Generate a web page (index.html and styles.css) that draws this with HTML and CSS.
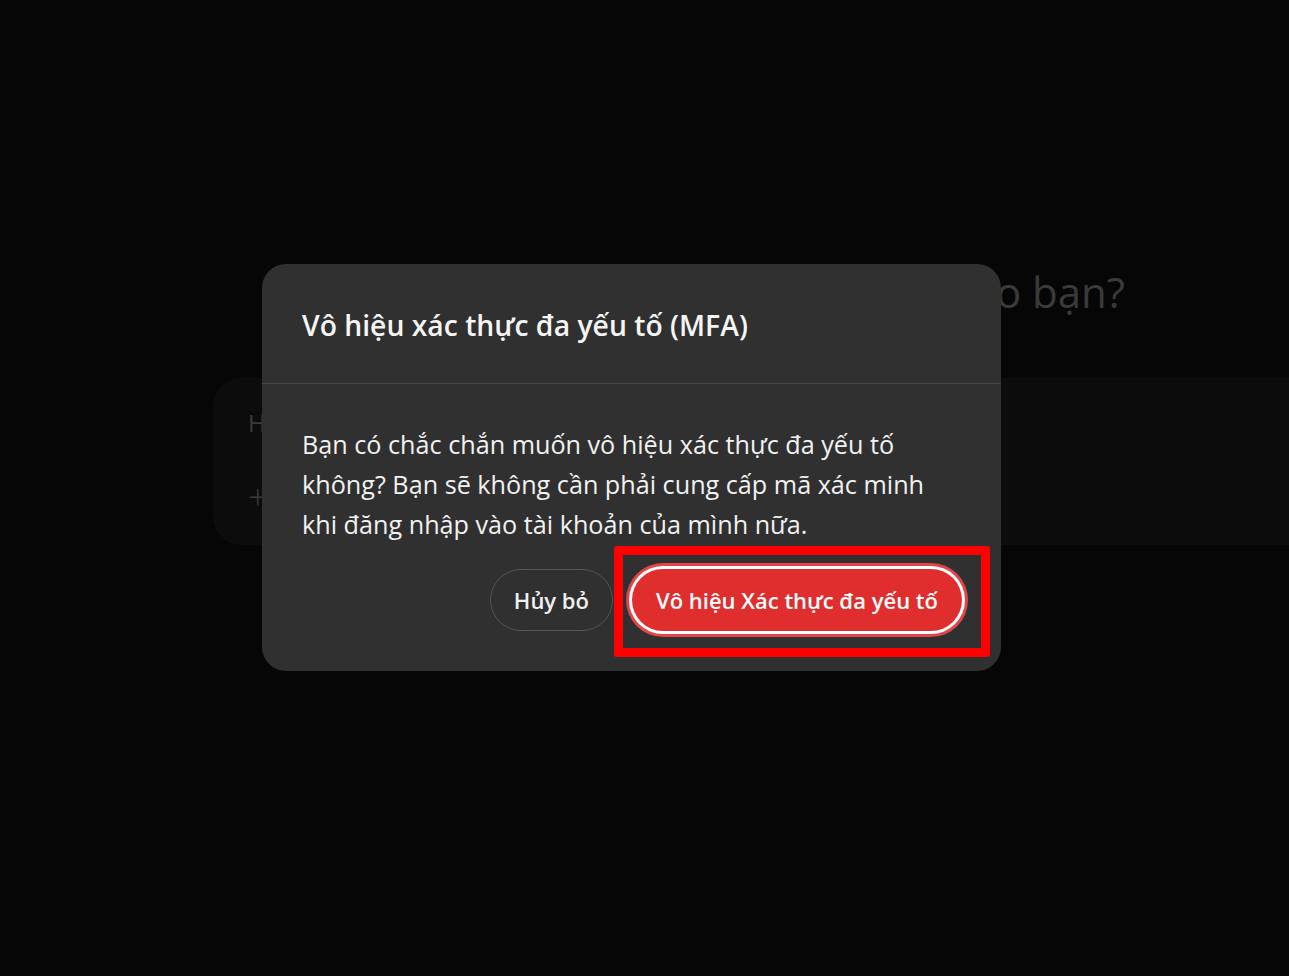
FILE: index.html
```html
<!DOCTYPE html>
<html lang="vi">
<head>
<meta charset="utf-8">
<title>Vô hiệu MFA</title>
<link rel="stylesheet" href="styles.css">
</head>
<body>
<div class="page">
  <div class="main">
    <h1 class="hero">Tôi có thể giúp gì cho bạn?</h1>
    <div class="composer">
      <div class="placeholder">Hỏi bất kỳ điều gì</div>
      <div class="tools"><span class="plus">+</span></div>
    </div>
  </div>
</div>
<div class="overlay">
  <div class="modal" role="dialog">
    <div class="modal-header">
      <h2 class="modal-title">Vô hiệu xác thực đa yếu tố (MFA)</h2>
    </div>
    <div class="modal-body">
      <p class="modal-text">Bạn có chắc chắn muốn vô hiệu xác thực đa yếu tố không? Bạn sẽ không cần phải cung cấp mã xác minh khi đăng nhập vào tài khoản của mình nữa.</p>
      <div class="actions">
        <button class="btn btn-secondary">Hủy bỏ</button>
        <button class="btn btn-danger">Vô hiệu Xác thực đa yếu tố</button>
      </div>
    </div>
  </div>
  <div class="highlight"></div>
</div>
</body>
</html>
```

FILE: styles.css
```css
html, body {
  margin: 0;
  padding: 0;
  height: 100%;
  overflow: hidden;
}
body {
  background: #060606;
  font-family: "Open Sans", "Noto Sans", "Liberation Sans", sans-serif;
  color: #fff;
}
.page {
  width: 1289px;
  height: 976px;
  overflow: hidden;
}
.main {
  padding-top: 262px;
  padding-left: 213px;
}
.hero {
  margin: 0;
  width: 912px;
  text-align: right;
  font-weight: 400;
  font-size: 42px;
  line-height: 60px;
  color: #3a3a3a;
  white-space: nowrap;
}
.composer {
  margin-top: 56px;
  width: 1200px;
  height: 167px;
  box-sizing: border-box;
  background: #0c0c0c;
  border-radius: 28px;
  padding: 30px 35px 30px 35px;
  display: flex;
  flex-direction: column;
  justify-content: space-between;
}
.placeholder {
  font-size: 24px;
  line-height: 30px;
  color: #3a3a3a;
}
.plus {
  font-size: 34px;
  line-height: 34px;
  color: #3a3a3a;
  font-weight: 300;
}
.overlay {
  position: absolute;
  inset: 0;
}
.modal {
  position: absolute;
  left: 262px;
  top: 264px;
  width: 739px;
  background: #303030;
  border-radius: 24px;
  overflow: hidden;
}
.modal-header {
  height: 120px;
  box-sizing: border-box;
  padding: 2px 40px 0;
  display: flex;
  align-items: center;
  border-bottom: 1px solid #474747;
}
.modal-title {
  margin: 0;
  font-size: 28.3px;
  font-weight: 600;
  color: #f5f5f5;
}
.modal-body {
  padding: 40px 39px 40px 40px;
}
.modal-text {
  margin: 0;
  font-size: 25.2px;
  line-height: 40px;
  color: #f2f2f2;
  max-width: 659px;
}
.actions {
  margin-top: 25px;
  display: flex;
  justify-content: flex-end;
  gap: 19px;
}
.btn {
  height: 62px;
  border-radius: 31px;
  font-family: inherit;
  font-size: 22px;
  font-weight: 600;
  padding: 0 23px;
  cursor: pointer;
  white-space: nowrap;
}
.btn-secondary {
  background: transparent;
  color: #f0f0f0;
  border: 1px solid #555;
  padding: 0 23px;
}
.btn-danger {
  background: #e02e2e;
  color: #fff;
  border: none;
  padding: 0 24px;
  box-shadow: 0 0 0 3px #ffffff, 0 0 0 6px #e24545;
}
.highlight {
  position: absolute;
  left: 614px;
  top: 546px;
  width: 376px;
  height: 111px;
  box-sizing: border-box;
  border: 9px solid #ff0000;
  border-radius: 3px;
}
```
